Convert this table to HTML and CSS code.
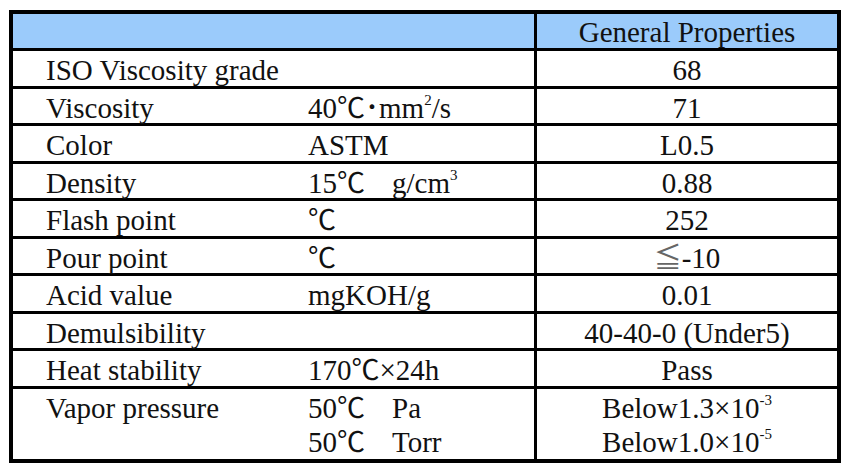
FILE: index.html
```html
<!DOCTYPE html>
<html>
<head>
<title>General Properties</title>
<link rel="stylesheet" href="styles.css">
</head>
<body>

<div id="sheet">
<table class="props">
<tr class="head">
  <td class="label"></td>
  <td class="unit"></td>
  <td class="value">General Properties</td>
</tr>
<tr>
  <td class="label">ISO Viscosity grade</td>
  <td class="unit"></td>
  <td class="value">68</td>
</tr>
<tr>
  <td class="label">Viscosity</td>
  <td class="unit">40<span class="cjk">℃</span><span class="cjk">･</span>mm<span class="sup">2</span>/s</td>
  <td class="value">71</td>
</tr>
<tr>
  <td class="label">Color</td>
  <td class="unit">ASTM</td>
  <td class="value">L0.5</td>
</tr>
<tr>
  <td class="label">Density</td>
  <td class="unit">15<span class="cjk">℃</span><span class="gap"></span>g/cm<span class="sup">3</span></td>
  <td class="value">0.88</td>
</tr>
<tr>
  <td class="label">Flash point</td>
  <td class="unit"><span class="cjk">℃</span></td>
  <td class="value">252</td>
</tr>
<tr>
  <td class="label">Pour point</td>
  <td class="unit"><span class="cjk">℃</span></td>
  <td class="value"><span class="cjk le">≦</span>-10</td>
</tr>
<tr>
  <td class="label">Acid value</td>
  <td class="unit">mgKOH/g</td>
  <td class="value">0.01</td>
</tr>
<tr>
  <td class="label">Demulsibility</td>
  <td class="unit"></td>
  <td class="value">40-40-0 (Under5)</td>
</tr>
<tr>
  <td class="label">Heat stability</td>
  <td class="unit">170<span class="cjk">℃</span>×24h</td>
  <td class="value">Pass</td>
</tr>
<tr class="vapor">
  <td class="label">Vapor pressure</td>
  <td class="unit">50<span class="cjk">℃</span><span class="gap"></span>Pa<br>50<span class="cjk">℃</span><span class="gap"></span>Torr</td>
  <td class="value">Below1.3×10<span class="sup">-3</span><br>Below1.0×10<span class="sup">-5</span></td>
</tr>
</table>
</div> <!-- End of "sheet" -->

</body>
</html>
```

FILE: styles.css
```css
body {
  margin: 0;
  background-color: #ffffff;
}
div#sheet {
  padding-top: 10px;
  padding-left: 9px;
}
table.props {
  border-collapse: separate;
  border-spacing: 0;
  border: 4px solid #000000;
  width: 832px;
  table-layout: fixed;
  font-family: "Liberation Serif", "Noto Sans CJK JP", serif;
  font-size: 29px;
  color: #111111;
}
table.props td {
  box-sizing: border-box;
  height: 37.5px;
  border-top: 3px solid #000000;
  padding: 4px 0 0 0;
  line-height: 30px;
  vertical-align: top;
  white-space: nowrap;
}
td.label {
  width: 287px;
  padding-left: 33px !important;
}
td.unit {
  width: 234px;
  padding-left: 8px !important;
}
td.value {
  width: 303px;
  border-left: 3px solid #000000;
  text-align: center;
}
tr.head td {
  height: 34px;
  border-top: 0;
  padding-top: 3px;
  background-color: #9bcbfb;
}
tr.vapor td {
  height: 73px;
  padding-top: 2px;
  line-height: 34px;
}
span.cjk {
  font-family: "Noto Sans CJK JP", sans-serif;
  font-size: 28px;
  line-height: 0;
}
span.le {
  color: #666666;
}
span.gap {
  display: inline-block;
  width: 27px;
}
span.sup {
  font-size: 15px;
  line-height: 0;
  vertical-align: 13px;
}
```
